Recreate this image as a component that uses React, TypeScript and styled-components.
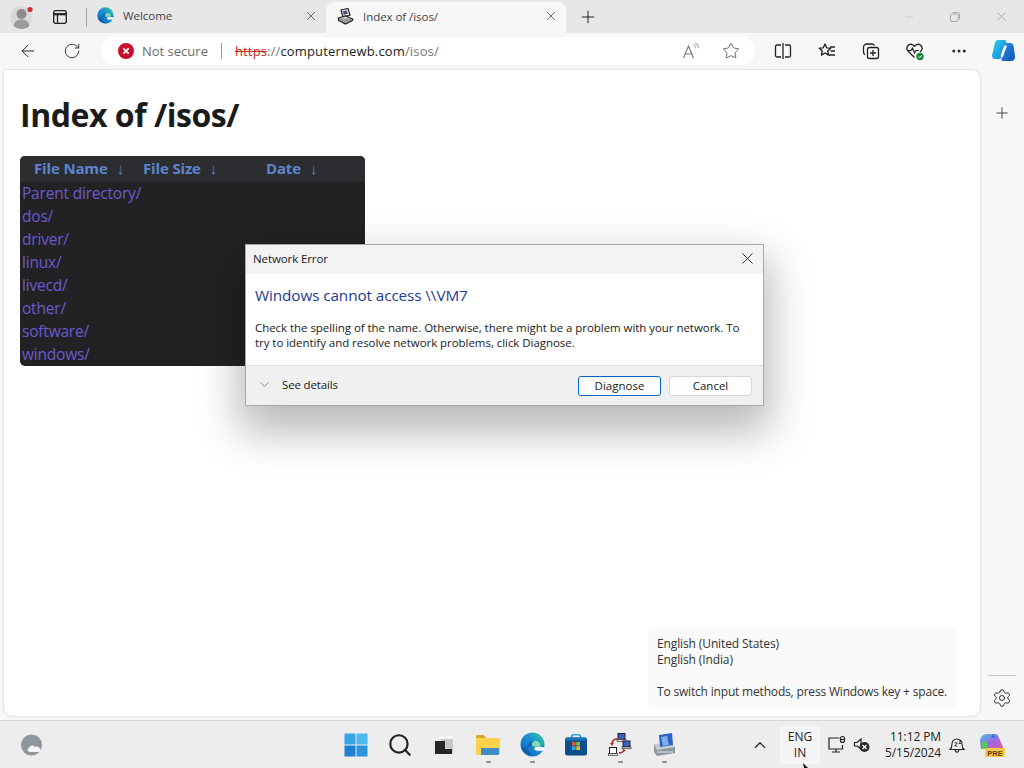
import React from 'react';
import styled, { createGlobalStyle } from 'styled-components';
import { ArrowLeft, RotateCw, Star, Plus, X, Minus, MoreHorizontal, Settings, ChevronUp, ChevronDown, Search } from 'lucide-react';

const GlobalStyle = createGlobalStyle`
  html, body { margin: 0; padding: 0; overflow: hidden; }
  body { font-family: "Open Sans", "Noto Sans", "Liberation Sans", sans-serif; }
`;

const Screen = styled.div`
  position: relative;
  width: 1024px;
  height: 768px;
  overflow: hidden;
  background: #f7f7f7;
  display: flex;
  flex-direction: column;
`;

/* browser chrome */
const TabStrip = styled.div`
  height: 33px;
  background: #e7e7e7;
  display: flex;
  align-items: flex-end;
`;

const StripButton = styled.div<{ $w: number }>`
  width: ${p => p.$w}px;
  height: 33px;
  display: flex;
  align-items: center;
  justify-content: center;
  flex: none;
  color: #222;
`;

const StripDivider = styled.div`
  width: 1px;
  height: 19px;
  margin: 0 10px 6px 10px;
  background: #a9a9a9;
  flex: none;
`;

const Tab = styled.div<{ $active?: boolean }>`
  width: ${p => (p.$active ? 240 : 229)}px;
  height: ${p => (p.$active ? 31 : 33)}px;
  padding: 0 8px ${p => (p.$active ? 3 : 2)}px ${p => (p.$active ? 11 : 0)}px;
  box-sizing: border-box;
  display: flex;
  align-items: center;
  flex: none;
  gap: 9px;
  background: ${p => (p.$active ? '#f7f7f7' : 'transparent')};
  border-radius: 8px 8px 0 0;
  font-size: 11.5px;
  color: #444;
`;

const TabTitle = styled.span`
  flex: 1;
  white-space: nowrap;
  letter-spacing: -0.05px;
`;

const WindowButton = styled.div`
  width: 46px;
  height: 33px;
  display: flex;
  align-items: center;
  justify-content: center;
  color: #a8a8a8;
`;

const Spacer = styled.div`
  flex: 1;
`;

const Toolbar = styled.div`
  height: 37px;
  box-sizing: border-box;
  background: #f7f7f7;
  display: flex;
  align-items: center;
  padding: 0 0 2px 6px;
`;

const ToolButton = styled.div<{ $w?: number }>`
  width: ${p => p.$w ?? 44}px;
  height: 30px;
  flex: none;
  display: flex;
  align-items: center;
  justify-content: center;
  color: #2a2a2a;
`;

const AddressBar = styled.div`
  width: 654px;
  height: 28px;
  margin: 0 6px 0 7px;
  flex: none;
  background: #fff;
  border-radius: 14px;
  display: flex;
  align-items: center;
  padding-left: 17px;
  padding-right: 4px;
  box-sizing: border-box;
  font-size: 13px;
`;

const NotSecure = styled.span`
  color: #6a6a6a;
  margin-left: 8px;
  white-space: nowrap;
`;

const AddressDivider = styled.div`
  width: 1px;
  height: 16px;
  background: #9a9a9a;
  margin: 0 13px;
`;

const Url = styled.div`
  flex: 1;
  white-space: nowrap;
  color: #222;
  letter-spacing: 0.15px;
`;

const UrlStrike = styled.span`
  color: #c42b1c;
  text-decoration: line-through;
`;

const UrlDim = styled.span`
  color: #777;
`;

/* page */
const Body = styled.div`
  flex: 1;
  display: flex;
  min-height: 0;
`;

const Page = styled.main`
  width: 976px;
  margin-left: 4px;
  margin-bottom: 4px;
  flex: none;
  background: #fff;
  border-radius: 0 8px 8px 8px;
  box-shadow: 0 0 2px rgba(0, 0, 0, 0.25);
  padding: 29px 0 0 16px;
  box-sizing: border-box;
`;

const Title = styled.h1`
  margin: 0 0 18px;
  font-size: 32px;
  line-height: 32px;
  padding-bottom: 7px;
  font-weight: 700;
  color: #1b1b1b;
  letter-spacing: -0.46px;
`;

const Listing = styled.table`
  width: 345px;
  border-collapse: separate;
  border-spacing: 0;
  background: #222225;
  border-radius: 5px;
  overflow: hidden;
  table-layout: fixed;
  font-size: 15.5px;
`;

const HeadCell = styled.th<{ $w: number; $pad: number }>`
  width: ${p => p.$w}px;
  height: 26px;
  padding: 0 0 2px ${p => p.$pad}px;
  box-sizing: border-box;
  background: #2c2d31;
  color: #5c85cf;
  font-size: 15px;
  font-weight: 700;
  text-align: left;
  white-space: nowrap;
  letter-spacing: -0.15px;
`;

const SortArrow = styled.span`
  margin-left: 9px;
  font-weight: 400;
`;

const NameCell = styled.td`
  height: 23px;
  padding: 0 0 0 2px;
  white-space: nowrap;
  color: #6a5acd;
  line-height: 23px;
  letter-spacing: -0.2px;
`;

/* sidebar */
const SideBar = styled.aside`
  flex: 1;
  display: flex;
  flex-direction: column;
  align-items: center;
  padding-bottom: 12px;
  color: #333;
`;

const SidePlus = styled.div`
  margin-top: 34px;
  height: 20px;
`;

const SideRule = styled.div`
  width: 28px;
  height: 1px;
  background: #c9c9c9;
  margin-bottom: 12px;
`;

/* taskbar */
const Taskbar = styled.footer`
  height: 48px;
  flex: none;
  background: #ededed;
  border-top: 1px solid #d6d6d6;
  box-sizing: border-box;
  display: flex;
  align-items: center;
`;

const TaskLeft = styled.div`
  width: 334px;
  padding-left: 20px;
  box-sizing: border-box;
  flex: none;
  display: flex;
  align-items: center;
`;

const TaskIcon = styled.div<{ $running?: boolean }>`
  position: relative;
  width: 44px;
  height: 44px;
  flex: none;
  display: flex;
  align-items: center;
  justify-content: center;
  color: #222;

  &::after {
    content: '';
    display: ${p => (p.$running ? 'block' : 'none')};
    position: absolute;
    bottom: 4px;
    left: 20px;
    width: 5px;
    height: 2px;
    border-radius: 1px;
    background: #8a8a8a;
  }
`;

const Tray = styled.div`
  flex: 1;
  display: flex;
  align-items: center;
  padding-left: 61px;
  color: #222;
`;

const TraySlot = styled.div<{ $w: number }>`
  width: ${p => p.$w}px;
  height: 38px;
  flex: none;
  display: flex;
  align-items: center;
  justify-content: center;
`;

const LangBox = styled.div`
  width: 40px;
  height: 38px;
  flex: none;
  background: #f5f5f5;
  border-radius: 4px;
  margin: 0 3px 0 7px;
  font-size: 12px;
  line-height: 16px;
  display: flex;
  flex-direction: column;
  align-items: center;
  justify-content: center;
  color: #222;
`;

const Clock = styled.div`
  width: 68px;
  flex: none;
  text-align: right;
  font-size: 12px;
  line-height: 16px;
  color: #222;
  white-space: nowrap;
  letter-spacing: -0.1px;
`;

const Cursor = styled.svg`
  position: absolute;
  left: 803px;
  top: 763px;
`;

/* input method flyout */
const Flyout = styled.div`
  position: absolute;
  left: 648px;
  top: 628px;
  width: 309px;
  height: 80px;
  box-sizing: border-box;
  padding: 8px 9px;
  background: #fafafa;
  border-radius: 6px;
  font-size: 12px;
  line-height: 16px;
  color: #333;
  letter-spacing: -0.12px;
`;

const FlyoutHint = styled.div`
  margin-top: 16px;
  white-space: nowrap;
  letter-spacing: -0.18px;
`;

/* network error dialog */
const Dialog = styled.section`
  position: absolute;
  left: 245px;
  top: 244px;
  width: 519px;
  height: 162px;
  box-sizing: border-box;
  display: flex;
  flex-direction: column;
  background: #fff;
  border: 1px solid #a8a8a8;
  box-shadow: 0 20px 40px 6px rgba(0, 0, 0, 0.28);
`;

const DialogTitleBar = styled.div`
  height: 29px;
  flex: none;
  display: flex;
  align-items: center;
  justify-content: space-between;
  padding: 0 6px 2px 7px;
  box-sizing: border-box;
  background: #f3f3f3;
  font-size: 11.5px;
  color: #1a1a1a;
  letter-spacing: -0.1px;
`;

const DialogBody = styled.div`
  flex: 1;
  padding: 11px 9px 0;
`;

const DialogHeading = styled.div`
  font-size: 15.3px;
  line-height: 20px;
  color: #1f3a93;
  letter-spacing: -0.1px;
`;

const DialogText = styled.p`
  margin: 15px 0 0;
  font-size: 11.5px;
  line-height: 15px;
  color: #1a1a1a;
  letter-spacing: -0.05px;
  width: 490px;
`;

const DialogFooter = styled.div`
  height: 40px;
  flex: none;
  display: flex;
  align-items: center;
  background: #f0f0f0;
  border-top: 1px solid #dfdfdf;
  padding: 0 11px 0 11px;
  box-sizing: border-box;
  gap: 8px;
`;

const Details = styled.div`
  flex: 1;
  display: flex;
  align-items: center;
  gap: 10px;
  font-size: 11.5px;
  color: #1a1a1a;
  letter-spacing: -0.15px;
  padding-bottom: 2px;
`;

const DialogButton = styled.button<{ $primary?: boolean }>`
  width: 83px;
  height: 20px;
  padding: 0;
  font: inherit;
  font-size: 11.5px;
  line-height: 16px;
  color: #1a1a1a;
  background: #fdfdfd;
  border-radius: 3px;
  border: 1px solid ${p => (p.$primary ? '#0067c0' : '#d8d8d8')};
`;

/* drawn icons */
const ProfileIcon = () => (
  <svg width="26" height="26" viewBox="0 0 26 26">
    <circle cx="12" cy="13" r="11" fill="#d8d8d8" />
    <circle cx="12.500" cy="10" r="5" fill="#8b8b8b" />
    <path d="M4.500 22c1-5 4-6.500 8-6.500s7 1.500 8 6.500c-2 2-5 3-8 3s-6-1-8-3z" fill="#9b9b9b" />
    <circle cx="21" cy="5.500" r="2.600" fill="#d42d2d" />
  </svg>
);

const TabsIcon = () => (
  <svg width="16" height="16" viewBox="0 0 16 16" fill="none" stroke="#222" strokeWidth="1.300">
    <rect x="1.700" y="1.700" width="12.600" height="12.600" rx="2" />
    <path d="M1.700 5.200h12.600" strokeWidth="2.200" />
    <path d="M5.500 5v9" />
  </svg>
);

const EdgeIcon = ({ size }: { size: number }) => (
  <svg width={size} height={size} viewBox="0 0 24 24">
    <defs>
      <linearGradient id={`edge-a-${size}`} x1="0" y1="1" x2="1" y2="0">
        <stop offset="0" stopColor="#0a5fb0" />
        <stop offset="0.6" stopColor="#1a95d8" />
        <stop offset="1" stopColor="#3dce7c" />
      </linearGradient>
    </defs>
    <circle cx="12" cy="12" r="11.500" fill={`url(#edge-a-${size})`} />
    <path d="M23.500 13c0 2-2 4.200-5.500 4.200-3.500 0-7-2-7-5.200 0-1.500 1-3 2.800-3.600-3.800-.4-6.800 2.400-6.800 6 0 2.600 1.500 5.400 5 7.600C8 22 3 20 1 15" fill="#0b4f9c" opacity="0.55" />
    <path d="M13.800 8.400c3.400 0 5.700 1.800 5.700 4 0 .8-.4 1.400-1.300 1.400h-6.300c-.6-2.400-.2-4.400 1.900-5.400z" fill="#8fe3a8" opacity="0.9" />
    <ellipse cx="18.500" cy="16" rx="5" ry="2" fill="#fff" opacity="0.95" />
  </svg>
);

const ServerFavicon = () => (
  <svg width="17" height="17" viewBox="0 0 17 17">
    <path d="M4 2l7-1.500 2 6.500-7 2z" fill="#e8e8f2" stroke="#222" strokeWidth="1.200" />
    <path d="M5.800 3.300l4-.9 1 3.300-4 1z" fill="#4a4a7a" />
    <path d="M1.500 10l7-2 7 3-7 3.500z" fill="#ddd" stroke="#222" strokeWidth="1.200" />
    <path d="M1.500 10v2.500l7 3.500 7-3.500V11" fill="#999" stroke="#222" strokeWidth="1.200" />
  </svg>
);

const ErrorBadge = () => (
  <svg width="16" height="16" viewBox="0 0 16 16" style={{ flex: 'none' }}>
    <circle cx="8" cy="8" r="8" fill="#c8102e" />
    <path d="M5.300 5.300l5.400 5.400M10.700 5.300l-5.400 5.400" stroke="#fff" strokeWidth="1.700" />
  </svg>
);

const ReadAloudIcon = () => (
  <svg width="20" height="20" viewBox="0 0 20 20" fill="none" stroke="#7a7a7a" strokeWidth="1.200">
    <path d="M2.500 17L7.500 5l5 12M4.300 13h6.400" />
    <path d="M12 3.500c1.800.6 2.800 2.200 3 4M14 2c2 .8 3.500 2.800 3.800 5" stroke="#b0b0b0" />
  </svg>
);

const SplitIcon = () => (
  <svg width="18" height="18" viewBox="0 0 18 18" fill="none" stroke="#222" strokeWidth="1.300">
    <path d="M7 3H3a1.500 1.500 0 0 0-1.500 1.500v9A1.500 1.500 0 0 0 3 15h4M11 3h4a1.500 1.500 0 0 1 1.500 1.500v9A1.500 1.500 0 0 1 15 15h-4M9 1v16" />
  </svg>
);

const FavoritesIcon = () => (
  <svg width="18" height="18" viewBox="0 0 18 18" fill="none" stroke="#222" strokeWidth="1.300">
    <path d="M7 2l1.700 3.800 4 .4-3 2.800.9 4.100L7 11l-3.600 2.100.9-4.100-3-2.800 4-.4z" strokeLinejoin="round" />
    <path d="M12 5h5M12.500 9H17M11 13h6" />
  </svg>
);

const CollectionsIcon = () => (
  <svg width="18" height="18" viewBox="0 0 18 18" fill="none" stroke="#222" strokeWidth="1.300">
    <rect x="5.500" y="5.500" width="11" height="11" rx="2" />
    <path d="M11 8v6M8 11h6" />
    <path d="M12.500 3.500C12 2.500 11 2 10 2H5a3.500 3.500 0 0 0-3.500 3.500V10c0 1.200.6 2.200 1.500 2.700" />
  </svg>
);

const HealthIcon = () => (
  <svg width="20" height="20" viewBox="0 0 20 20" fill="none">
    <path d="M9.500 16.500L3 10c-3-3.500 1-8.500 5-6l1.500 1.300L11 4c4-2.500 8 2.500 5 6l-1 1" stroke="#222" strokeWidth="1.300" />
    <path d="M2 9.500h4l1.500-2.500 2 5 1.500-2.500h3" stroke="#222" strokeWidth="1.200" />
    <circle cx="15" cy="15.500" r="3.700" fill="#1c8a3b" />
    <path d="M13.400 15.500l1.200 1.200 2-2.200" stroke="#fff" strokeWidth="1" />
  </svg>
);

const CopilotIcon = () => (
  <svg width="26" height="26" viewBox="0 0 26 26">
    <defs>
      <linearGradient id="cop-a" x1="0" y1="0" x2="1" y2="1">
        <stop offset="0" stopColor="#2ad0e8" />
        <stop offset="1" stopColor="#1683dc" />
      </linearGradient>
      <linearGradient id="cop-b" x1="0" y1="0" x2="1" y2="1">
        <stop offset="0" stopColor="#2b8ce8" />
        <stop offset="1" stopColor="#0e56b8" />
      </linearGradient>
    </defs>
    <path d="M8 2h7c1 0 1.500.8 1.200 1.800L11.500 19c-.5 1.500-1.500 2-3 2H5c-2 0-3.500-2-3-4L5 5c.4-2 1.500-3 3-3z" fill="url(#cop-a)" />
    <path d="M15 5h5c2 0 3 1 3.500 3l1.500 10c.4 3-1.500 5-4 5h-8c-1.500 0-2-1-1.500-2z" fill="url(#cop-b)" />
    <path d="M15.500 8.500c-1.500 3-2.500 6-3.500 9.500" stroke="#fff" strokeWidth="2.600" strokeLinecap="round" fill="none" />
  </svg>
);

const WeatherIcon = () => (
  <svg width="24" height="24" viewBox="0 0 24 24">
    <circle cx="11.500" cy="12" r="10.500" fill="#8e979c" />
    <path d="M10 19c-2.500 0-3.500-3-1-4 .5-2.500 4-3.500 5.500-1.200 2-.8 5.500.2 6 2.700 1 1.500-.5 2.500-2 2.500z" fill="#f5f5f5" />
  </svg>
);

const StartIcon = () => (
  <svg width="24" height="24" viewBox="0 0 24 24">
    <rect x="0.500" y="0.500" width="11" height="11" fill="#36a5e8" />
    <rect x="12.500" y="0.500" width="11" height="11" fill="#4cb8ee" />
    <rect x="0.500" y="12.500" width="11" height="11" fill="#1a83d4" />
    <rect x="12.500" y="12.500" width="11" height="11" fill="#2a96e0" />
  </svg>
);

const TaskViewIcon = () => (
  <svg width="22" height="22" viewBox="0 0 22 22">
    <rect x="6" y="2" width="14" height="15" rx="2" fill="#f6f6f6" />
    <rect x="8" y="5" width="12" height="14" fill="#c8c8c8" />
    <rect x="2" y="7" width="10" height="13" fill="#262626" />
    <rect x="12" y="15" width="7" height="5" fill="#262626" />
  </svg>
);

const FolderIcon = () => (
  <svg width="26" height="24" viewBox="0 0 26 24">
    <path d="M1 3.500C1 2.500 1.700 2 2.500 2h6l3 3H1z" fill="#d6a52a" />
    <rect x="1" y="5" width="24" height="17" rx="1.500" fill="#fbd249" />
    <rect x="6" y="15" width="18" height="7" rx="1" fill="#3f8bc6" />
  </svg>
);

const StoreIcon = () => (
  <svg width="24" height="24" viewBox="0 0 24 24">
    <path d="M7.500 5V3.500c0-1 1-1.700 2-1.700h5c1 0 2 .7 2 1.700V5" fill="none" stroke="#27a0d8" strokeWidth="1.600" />
    <rect x="1" y="4.500" width="22" height="18" rx="2.500" fill="#0f4d8c" />
    <rect x="1" y="4.500" width="22" height="3" rx="1.500" fill="#1b74b8" />
    <rect x="8" y="9" width="3.700" height="3.700" fill="#e8552b" />
    <rect x="12.300" y="9" width="3.700" height="3.700" fill="#7cbb32" />
    <rect x="8" y="13.300" width="3.700" height="3.700" fill="#2ba3e3" />
    <rect x="12.300" y="13.300" width="3.700" height="3.700" fill="#f7b619" />
  </svg>
);

const NetworkIcon = () => (
  <svg width="26" height="26" viewBox="0 0 26 26">
    <rect x="11" y="1.500" width="7" height="6" fill="#3c5fc4" stroke="#222" />
    <rect x="10" y="7.500" width="9" height="1.800" fill="#ddd" stroke="#222" strokeWidth="0.600" />
    <rect x="16" y="9" width="7" height="6" fill="#3c5fc4" stroke="#222" />
    <rect x="15" y="15" width="9" height="1.800" fill="#ddd" stroke="#222" strokeWidth="0.600" />
    <rect x="2.500" y="15.500" width="7" height="6" fill="#fff" stroke="#222" />
    <rect x="1.500" y="21.500" width="9" height="2" fill="#ddd" stroke="#222" strokeWidth="0.600" />
    <path d="M5 12c0-3 1.500-4.500 5-5.500M12 21c3 0 4.500-1 5.500-3" fill="none" stroke="#b12a2a" strokeWidth="1.500" />
    <path d="M3 11h4l-2 3zM16 16.500l2.500 2-3 1.500z" fill="#b12a2a" />
  </svg>
);

const DeviceIcon = () => (
  <svg width="26" height="26" viewBox="0 0 26 26">
    <path d="M3 12l18-2 3 5-18 3z" fill="#c6ccd2" />
    <path d="M3 12v8l3 4 18-3v-6l-18 3z" fill="#8f979e" />
    <path d="M8 3l13-2 1 12-13 2z" fill="#2c62c6" />
    <path d="M10 5l6-1 2 9-6 1z" fill="#7fb0ea" />
    <path d="M6 20h16" stroke="#dfe3e6" strokeWidth="1" />
  </svg>
);

const MonitorIcon = () => (
  <svg width="20" height="20" viewBox="0 0 20 20" fill="none" stroke="#222" strokeWidth="1.200">
    <path d="M12.500 3H2v11h13.500v-4" />
    <path d="M9 14v3M5 17h8" />
    <rect x="13.500" y="1.500" width="4" height="6" rx="2" />
    <path d="M13.500 4.500h4" />
  </svg>
);

const SoundOffIcon = () => (
  <svg width="18" height="18" viewBox="0 0 18 18">
    <path d="M1.500 6.500h2.500l4-3.500v10L4 10H1.500z" fill="none" stroke="#222" strokeWidth="1.200" />
    <circle cx="11.500" cy="11" r="5" fill="#2a2a2a" />
    <path d="M9.500 9l4 4M13.500 9l-4 4" stroke="#fff" strokeWidth="1.200" />
  </svg>
);

const BellIcon = () => (
  <svg width="18" height="18" viewBox="0 0 18 18" fill="none" stroke="#222" strokeWidth="1.100">
    <path d="M4 8c0-3 2-5 5-5s5 2 5 5c0 3 .8 4.500 2 5.500H2C3.200 12.500 4 11 4 8zM7.300 14c0 1.300.7 2.200 1.700 2.200s1.700-.9 1.700-2.200" />
    <path d="M6.800 6.800h2.400L6.800 10h2.400M11 5h2l-2 2.500h2" strokeWidth="0.900" />
  </svg>
);

const CopilotPreIcon = () => (
  <svg width="26" height="26" viewBox="0 0 26 26">
    <defs>
      <linearGradient id="pre-a" x1="0" y1="0" x2="1" y2="1">
        <stop offset="0" stopColor="#3fc6d8" />
        <stop offset="0.5" stopColor="#9a6ae8" />
        <stop offset="1" stopColor="#e85a9a" />
      </linearGradient>
    </defs>
    <path d="M8 2h8c2 0 3 1 3.500 3L25 17H2L1 9C1 5 4 2 8 2z" fill="url(#pre-a)" />
    <path d="M3 12c0-4 4-4 5-1l1 6H3z" fill="#5cc45c" />
    <path d="M14 2l2 3-4 1z" fill="#1f6fd0" />
    <rect x="6" y="16" width="20" height="9" rx="2" fill="#f7c948" />
    <text x="16" y="23.500" fontSize="7.500" fontWeight="700" textAnchor="middle" fill="#5a3a00" fontFamily="Liberation Sans, sans-serif">PRE</text>
  </svg>
);

const rows = ['Parent directory/', 'dos/', 'driver/', 'linux/', 'livecd/', 'other/', 'software/', 'windows/'];

export default function App() {
  return (
    <Screen>
      <GlobalStyle />
      <TabStrip>
        <StripButton $w={44}><ProfileIcon /></StripButton>
        <StripButton $w={32}><TabsIcon /></StripButton>
        <StripDivider />
        <Tab>
          <EdgeIcon size={17} />
          <TabTitle>Welcome</TabTitle>
          <X size={14} strokeWidth={1.5} color="#555" />
        </Tab>
        <Tab $active>
          <ServerFavicon />
          <TabTitle>Index of /isos/</TabTitle>
          <X size={14} strokeWidth={1.5} color="#555" />
        </Tab>
        <StripButton $w={44}><Plus size={20} strokeWidth={1.2} /></StripButton>
        <Spacer />
        <WindowButton><Minus size={12} strokeWidth={1} /></WindowButton>
        <WindowButton>
          <svg width="12" height="12" viewBox="0 0 12 12" fill="none" stroke="currentColor">
            <rect x="1.500" y="3" width="7.500" height="7.500" rx="1.500" />
            <path d="M3.500 1.500h5A2 2 0 0 1 10.500 3.500v5" />
          </svg>
        </WindowButton>
        <WindowButton><X size={15} strokeWidth={1.4} /></WindowButton>
      </TabStrip>
      <Toolbar>
        <ToolButton><ArrowLeft size={20} strokeWidth={1.2} /></ToolButton>
        <ToolButton><RotateCw size={18} strokeWidth={1.2} /></ToolButton>
        <AddressBar>
          <ErrorBadge />
          <NotSecure>Not secure</NotSecure>
          <AddressDivider />
          <Url><UrlStrike>https</UrlStrike><UrlDim>://</UrlDim>computernewb.com<UrlDim>/isos/</UrlDim></Url>
          <ToolButton $w={40}><ReadAloudIcon /></ToolButton>
          <ToolButton $w={40}><Star size={18} strokeWidth={1.2} color="#555" /></ToolButton>
        </AddressBar>
        <ToolButton><SplitIcon /></ToolButton>
        <ToolButton><FavoritesIcon /></ToolButton>
        <ToolButton><CollectionsIcon /></ToolButton>
        <ToolButton><HealthIcon /></ToolButton>
        <ToolButton><MoreHorizontal size={18} strokeWidth={2} /></ToolButton>
        <ToolButton><CopilotIcon /></ToolButton>
      </Toolbar>
      <Body>
        <Page>
          <Title>Index of /isos/</Title>
          <Listing>
            <thead>
              <tr>
                <HeadCell $w={122} $pad={14}>File Name<SortArrow>↓</SortArrow></HeadCell>
                <HeadCell $w={124} $pad={1}>File Size<SortArrow>↓</SortArrow></HeadCell>
                <HeadCell $w={99} $pad={0}>Date<SortArrow>↓</SortArrow></HeadCell>
              </tr>
            </thead>
            <tbody>
              {rows.map(name => (
                <tr key={name}>
                  <NameCell colSpan={3}>{name}</NameCell>
                </tr>
              ))}
            </tbody>
          </Listing>
        </Page>
        <SideBar>
          <SidePlus><Plus size={18} strokeWidth={1.2} /></SidePlus>
          <Spacer />
          <SideRule />
          <Settings size={20} strokeWidth={1.2} />
        </SideBar>
      </Body>
      <Taskbar>
        <TaskLeft><WeatherIcon /></TaskLeft>
        <TaskIcon><StartIcon /></TaskIcon>
        <TaskIcon><Search size={26} strokeWidth={2} /></TaskIcon>
        <TaskIcon><TaskViewIcon /></TaskIcon>
        <TaskIcon $running><FolderIcon /></TaskIcon>
        <TaskIcon $running><EdgeIcon size={25} /></TaskIcon>
        <TaskIcon><StoreIcon /></TaskIcon>
        <TaskIcon $running><NetworkIcon /></TaskIcon>
        <TaskIcon $running><DeviceIcon /></TaskIcon>
        <Tray>
          <TraySlot $w={26}><ChevronUp size={18} strokeWidth={1.6} /></TraySlot>
          <LangBox><span>ENG</span><span>IN</span></LangBox>
          <TraySlot $w={28}><MonitorIcon /></TraySlot>
          <TraySlot $w={22}><SoundOffIcon /></TraySlot>
          <Clock>11:12 PM<br />5/15/2024</Clock>
          <TraySlot $w={32}><BellIcon /></TraySlot>
          <TraySlot $w={38}><CopilotPreIcon /></TraySlot>
        </Tray>
      </Taskbar>
      <Flyout>
        English (United States)<br />
        English (India)
        <FlyoutHint>To switch input methods, press Windows key + space.</FlyoutHint>
      </Flyout>
      <Dialog>
        <DialogTitleBar>
          Network Error
          <X size={19} strokeWidth={1.1} color="#111" />
        </DialogTitleBar>
        <DialogBody>
          <DialogHeading>Windows cannot access \\VM7</DialogHeading>
          <DialogText>
            Check the spelling of the name. Otherwise, there might be a problem with your network. To try to identify and resolve network problems, click Diagnose.
          </DialogText>
        </DialogBody>
        <DialogFooter>
          <Details>
            <ChevronDown size={15} strokeWidth={1.3} color="#777" />
            See details
          </Details>
          <DialogButton $primary>Diagnose</DialogButton>
          <DialogButton>Cancel</DialogButton>
        </DialogFooter>
      </Dialog>
      <Cursor width="8" height="5" viewBox="0 0 8 5">
        <path d="M0 0l5 5H1z" fill="#111" />
      </Cursor>
    </Screen>
  );
}
